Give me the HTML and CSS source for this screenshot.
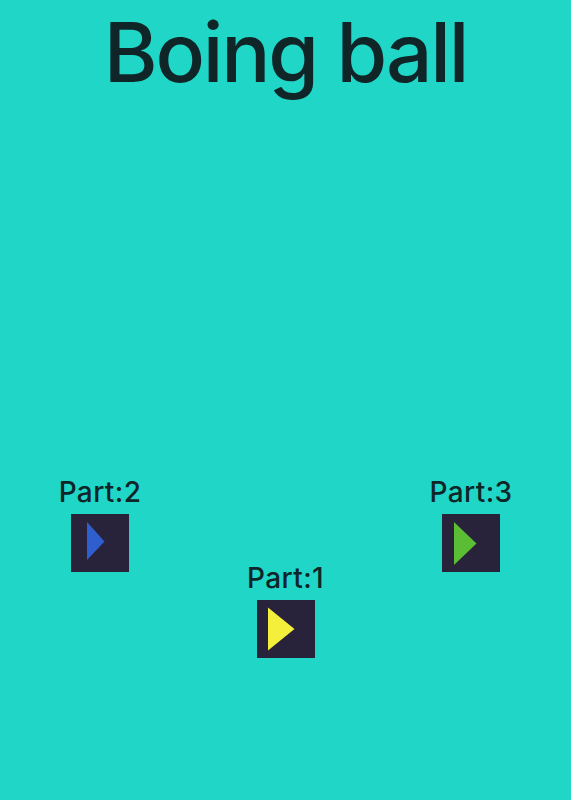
FILE: index.html
```html
<!DOCTYPE html>
<html lang="en">
<head>
<meta charset="utf-8">
<title>Boing ball</title>
<link rel="stylesheet" href="styles.css">
</head>
<body>
<h1 class="title">Boing ball</h1>
<div class="parts">
  <div class="part">
    <div class="label">Part:2</div>
    <button class="play" aria-label="Play part 2">
      <svg width="58" height="58" viewBox="0 0 58 58"><polygon points="16,8 33.5,27.5 16,46" fill="#2f5fcf"/></svg>
    </button>
  </div>
  <div class="part part-low">
    <div class="label">Part:1</div>
    <button class="play" aria-label="Play part 1">
      <svg width="58" height="58" viewBox="0 0 58 58"><polygon points="11,7.5 37.5,29 11,50.5" fill="#f3ef3a"/></svg>
    </button>
  </div>
  <div class="part">
    <div class="label">Part:3</div>
    <button class="play" aria-label="Play part 3">
      <svg width="58" height="58" viewBox="0 0 58 58"><polygon points="12,8 34.5,29.5 12,51" fill="#5bbd33"/></svg>
    </button>
  </div>
</div>
</body>
</html>
```
FILE: styles.css
```css
html, body {
  margin: 0;
  padding: 0;
}
body {
  background: #20d6c7;
  font-family: Inter, "Noto Sans", sans-serif;
  color: #0f2527;
  width: 571px;
  height: 800px;
  overflow: hidden;
}
.title {
  margin: 12px 0 0;
  font-size: 82px;
  font-weight: 500;
  line-height: 1;
  text-align: center;
  letter-spacing: -2.2px;
}
.parts {
  display: flex;
  justify-content: center;
  align-items: flex-start;
  gap: 65.5px;
  margin-top: 384px;
}
.part {
  width: 120px;
  display: flex;
  flex-direction: column;
  align-items: center;
  gap: 8px;
}
.part-low {
  margin-top: 86px;
}
.label {
  font-size: 28px;
  line-height: 1;
  font-weight: 450;
  letter-spacing: 0.4px;
}
.play {
  width: 58px;
  height: 58px;
  padding: 0;
  border: none;
  background: #28233a;
  display: block;
}
.play svg {
  display: block;
}
```
